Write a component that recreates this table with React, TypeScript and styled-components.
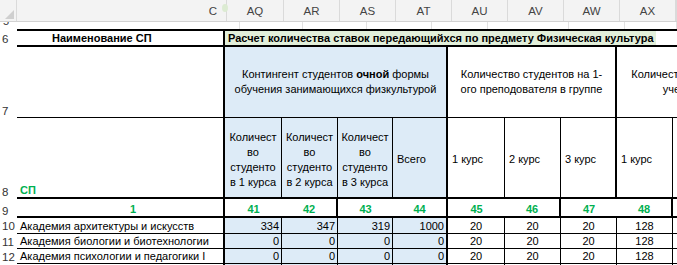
import React from "react";
import styled, { createGlobalStyle } from "styled-components";

const GlobalStyle = createGlobalStyle`
  html, body {
    margin: 0;
    padding: 0;
    background: #fff;
  }
`;

const FONT = `"Liberation Sans", Arial, sans-serif`;

const Page = styled.div`
  position: relative;
  width: 677px;
  height: 265px;
  overflow: hidden;
  font-family: ${FONT};
  font-size: 11px;
  color: #000;
  background: #fff;
`;

/* column letters */
const HeaderBar = styled.div`
  display: flex;
  height: 22px;
  box-sizing: border-box;
  background: #f3f3f3;
  border-bottom: 1px solid #d2d2d2;
`;

const Corner = styled.div`
  flex: none;
  width: 17px;
  box-sizing: border-box;
  border-right: 1px solid #dadada;
  display: flex;
  align-items: flex-end;
  justify-content: flex-end;
  padding: 0 2px 2px 0;
`;

const ColHead = styled.div<{ $w: number; $right?: boolean }>`
  flex: none;
  width: ${({ $w }) => $w}px;
  box-sizing: border-box;
  border-right: 1px solid #dadada;
  color: #444;
  font-size: 11.5px;
  line-height: 22px;
  text-align: ${({ $right }) => ($right ? "right" : "center")};
  padding-right: ${({ $right }) => ($right ? 9 : 0)}px;
`;

const Handle = styled.div`
  position: absolute;
  left: 222px;
  top: 4px;
  width: 6px;
  height: 8px;
  border-radius: 50%;
  background: #dcebd2;
`;

/* half-hidden row 5 */
const SliverRow = styled.div`
  display: flex;
  height: 9px;
`;

const SliverNum = styled.div`
  flex: none;
  width: 17px;
  height: 7px;
  overflow: hidden;
  color: #333;
  padding-left: 3px;
  box-sizing: border-box;
  line-height: 14px;

  span {
    display: block;
    margin-top: -8px;
  }
`;

const SliverCells = styled.div`
  flex: 1;
  display: flex;
  border-bottom: 2px solid #000;
`;

const SliverCell = styled.div<{ $w: number }>`
  flex: none;
  width: ${({ $w }) => $w}px;
  box-sizing: border-box;
  border-right: 1px solid #e2e2e2;
`;

/* sheet body */
const Grid = styled.div`
  display: grid;
  grid-template-columns: 17px 208px 57px 56px 55px 55px 57px 56px 56px 56px 4px;
  grid-template-rows: 16px 71px 81px 19px 16px 15px 15px 1px;
`;

const RowNum = styled.div<{ $bottom?: boolean }>`
  display: flex;
  align-items: ${({ $bottom }) => ($bottom ? "flex-end" : "center")};
  padding-left: 2px;
  color: #333;
  font-size: 11.5px;
  line-height: 14px;
  overflow: hidden;
`;

const Cell = styled.div<{ $span?: number; $r?: number; $b?: number; $bg?: string }>`
  box-sizing: border-box;
  grid-column: span ${({ $span = 1 }) => $span};
  min-width: 0;
  overflow: hidden;
  display: flex;
  white-space: nowrap;
  line-height: 14px;
  background: ${({ $bg = "#fff" }) => $bg};
  border-right: ${({ $r = 0 }) => $r}px solid #000;
  border-bottom: ${({ $b = 0 }) => $b}px solid #000;
`;

const NameHead = styled(Cell)`
  align-items: center;
  padding-left: 35px;
  font-weight: 700;
`;

const TitleCell = styled(Cell)`
  align-items: stretch;
`;

const TitleMark = styled.span`
  display: flex;
  align-items: center;
  padding: 0 2px 0 3px;
  background: #e2efda;
  font-weight: 700;
`;

const GroupHead = styled(Cell)`
  align-items: center;
  justify-content: center;
  text-align: center;
  line-height: 15px;
`;

const ClipHead = styled(Cell)`
  align-items: center;
`;

const ClipInner = styled.div`
  flex: none;
  width: 170px;
  text-align: center;
  line-height: 15px;
`;

const SubHead = styled(Cell)<{ $center?: boolean; $color?: string }>`
  align-items: center;
  justify-content: ${({ $center }) => ($center ? "center" : "flex-start")};
  text-align: ${({ $center }) => ($center ? "center" : "left")};
  padding: 4px 0 0 ${({ $center }) => ($center ? 0 : 4)}px;
  line-height: 15px;
  color: ${({ $color = "#000" }) => $color};
`;

const CodeHead = styled(Cell)`
  align-items: flex-end;
  padding-left: 3px;
  color: #00b050;
  font-weight: 700;
`;

const IndexCell = styled(Cell)<{ $pl?: number }>`
  align-items: flex-end;
  justify-content: center;
  padding-left: ${({ $pl = 0 }) => $pl}px;
  color: #00b050;
  font-weight: 700;
`;

const NameCell = styled(Cell)`
  align-items: center;
  padding-left: 3px;
`;

const NumCell = styled(Cell)<{ $align: "right" | "center" }>`
  align-items: center;
  justify-content: ${({ $align }) => ($align === "right" ? "flex-end" : "center")};
  padding-right: ${({ $align }) => ($align === "right" ? 2 : 0)}px;
`;

const BLUE = "#ddebf7";

const letters = [
  { t: "C", w: 210, right: true },
  { t: "AQ", w: 57 },
  { t: "AR", w: 56 },
  { t: "AS", w: 56 },
  { t: "AT", w: 56 },
  { t: "AU", w: 56 },
  { t: "AV", w: 56 },
  { t: "AW", w: 56 },
  { t: "AX", w: 56 },
  { t: "", w: 1 },
];

const sliverWidths = [223, 63, 64, 65, 56, 81, 56, 52];

const indexes = [
  { v: 41, r: 0 },
  { v: 42, r: 2 },
  { v: 43, r: 0 },
  { v: 44, r: 2 },
  { v: 45, r: 0 },
  { v: 46, r: 2 },
  { v: 47, r: 0 },
  { v: 48, r: 2 },
];

const rows = [
  { n: 10, name: "Академия архитектуры и искусств", c: [334, 347, 319, 1000], g: [20, 20, 20, 128] },
  { n: 11, name: "Академия биологии и биотехнологии", c: [0, 0, 0, 0], g: [20, 20, 20, 128] },
  { n: 12, name: "Академия психологии и педагогики I", c: [0, 0, 0, 0], g: [20, 20, 20, 128] },
];

const CornerMark = () => (
  <svg width="9" height="9" viewBox="0 0 9 9">
    <path d="M9 0 L9 9 L0 9 Z" fill="#cfcfcf" />
  </svg>
);

const CountHead = ({ course }: { course: number }) => (
  <>
    Количест
    <br />
    во
    <br />
    студенто
    <br />в {course} курса
  </>
);

export default function App() {
  return (
    <Page>
      <GlobalStyle />
      <HeaderBar>
        <Corner>
          <CornerMark />
        </Corner>
        {letters.map((l, i) => (
          <ColHead key={i} $w={l.w} $right={l.right}>
            {l.t}
          </ColHead>
        ))}
      </HeaderBar>
      <Handle />

      <SliverRow>
        <SliverNum>
          <span>5</span>
        </SliverNum>
        <SliverCells>
          {sliverWidths.map((w, i) => (
            <SliverCell key={i} $w={w} />
          ))}
        </SliverCells>
      </SliverRow>

      <Grid>
        {/* row 6 */}
        <RowNum>6</RowNum>
        <NameHead $r={2} $b={2}>Наименование СП</NameHead>
        <TitleCell $span={9} $b={2}>
          <TitleMark>Расчет количества ставок передающийхся по предмету Физическая культура</TitleMark>
        </TitleCell>

        {/* row 7 */}
        <RowNum $bottom>7</RowNum>
        <Cell $r={2} $b={1} />
        <GroupHead $span={4} $r={2} $b={1} $bg={BLUE}>
          <div>
            Контингент студентов <b>очной</b> формы
            <br />
            обучения занимающихся физкультурой
          </div>
        </GroupHead>
        <GroupHead $span={3} $r={2} $b={1}>
          <div>
            Количество студентов на 1-
            <br />
            ого преподователя в группе
          </div>
        </GroupHead>
        <ClipHead $span={2} $b={1}>
          <ClipInner>
            Количество студентов на 1-
            <br />
            учебной группе
          </ClipInner>
        </ClipHead>

        {/* row 8 */}
        <RowNum $bottom>8</RowNum>
        <CodeHead $r={2} $b={2}>СП</CodeHead>
        {[1, 2, 3].map((c) => (
          <SubHead key={c} $center $r={1} $b={2} $bg={BLUE}>
            <div>
              <CountHead course={c} />
            </div>
          </SubHead>
        ))}
        <SubHead $r={2} $b={2} $bg={BLUE}>Всего</SubHead>
        <SubHead $r={1} $b={2}>1 курс</SubHead>
        <SubHead $r={1} $b={2}>2 курс</SubHead>
        <SubHead $r={2} $b={2}>3 курс</SubHead>
        <SubHead $r={1} $b={2}>1 курс</SubHead>
        <SubHead $b={2} $color="#e69b22">
          2 курс
        </SubHead>

        {/* row 9 */}
        <RowNum $bottom>9</RowNum>
        <IndexCell $r={2} $b={2} $pl={26}>
          1
        </IndexCell>
        {indexes.map((x) => (
          <IndexCell key={x.v} $r={x.r} $b={2}>
            {x.v}
          </IndexCell>
        ))}
        <Cell $b={2} />

        {/* rows 10-12 */}
        {rows.map((row) => (
          <React.Fragment key={row.n}>
            <RowNum>{row.n}</RowNum>
            <NameCell $r={2} $b={1}>
              {row.name}
            </NameCell>
            {row.c.map((v, i) => (
              <NumCell key={`c${i}`} $align="right" $r={i === 3 ? 2 : 1} $b={1} $bg={BLUE}>
                {v}
              </NumCell>
            ))}
            {row.g.map((v, i) => (
              <NumCell key={`g${i}`} $align="center" $r={1} $b={1}>
                {v}
              </NumCell>
            ))}
            <Cell $b={1} />
          </React.Fragment>
        ))}

        {/* row 13, first pixel */}
        <RowNum />
        <Cell $r={2} />
        {[1, 1, 1, 2].map((r, i) => (
          <Cell key={`s${i}`} $r={r} $bg={BLUE} />
        ))}
        {[1, 1, 1, 1].map((r, i) => (
          <Cell key={`t${i}`} $r={r} />
        ))}
        <Cell />
      </Grid>
    </Page>
  );
}
